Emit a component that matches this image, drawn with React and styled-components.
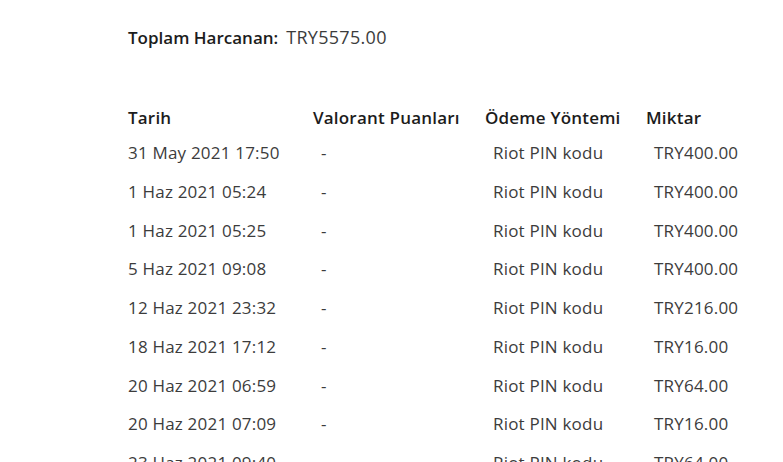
import React from "react";
import styled, { createGlobalStyle } from "styled-components";

const GlobalStyle = createGlobalStyle`
  body {
    margin: 0;
    background: #fff;
    font-family: "Open Sans", "Liberation Sans", sans-serif;
  }
`;

const Page = styled.div`
  padding: 25px 0 0 128px;
  color: #3c3c3c;
  font-size: 17px;
  letter-spacing: 0.2px;
`;

const Total = styled.div`
  font-size: 18px;
  line-height: 24px;
  margin-bottom: 45px;
  letter-spacing: 0.3px;

  b {
    color: #1c1c1c;
    font-size: 17px;
    font-weight: 600;
    letter-spacing: 0;
    margin-right: 3px;
  }
`;

const Table = styled.div`
  display: grid;
  grid-template-columns: 185px 172px 161px auto;
  grid-auto-rows: 38.75px;
  align-items: center;
  white-space: nowrap;
`;

const Head = styled.div`
  color: #1c1c1c;
  font-weight: 600;
  height: 29px;
  line-height: 26px;
  align-self: end;
`;

const Cell = styled.div`
  padding-left: ${(p) => (p.$first ? "0" : "8px")};
  line-height: 24px;
`;

const rows = [
  ["31 May 2021 17:50", "TRY400.00"],
  ["1 Haz 2021 05:24", "TRY400.00"],
  ["1 Haz 2021 05:25", "TRY400.00"],
  ["5 Haz 2021 09:08", "TRY400.00"],
  ["12 Haz 2021 23:32", "TRY216.00"],
  ["18 Haz 2021 17:12", "TRY16.00"],
  ["20 Haz 2021 06:59", "TRY64.00"],
  ["20 Haz 2021 07:09", "TRY16.00"],
  ["23 Haz 2021 09:40", "TRY64.00"],
];

export default function App() {
  return (
    <Page>
      <GlobalStyle />
      <Total>
        <b>Toplam Harcanan:</b> TRY5575.00
      </Total>
      <Table>
        <Head>Tarih</Head>
        <Head>Valorant Puanları</Head>
        <Head>Ödeme Yöntemi</Head>
        <Head>Miktar</Head>
        {rows.map(([date, amount]) => (
          <React.Fragment key={date}>
            <Cell $first>{date}</Cell>
            <Cell>-</Cell>
            <Cell>Riot PIN kodu</Cell>
            <Cell>{amount}</Cell>
          </React.Fragment>
        ))}
      </Table>
    </Page>
  );
}
